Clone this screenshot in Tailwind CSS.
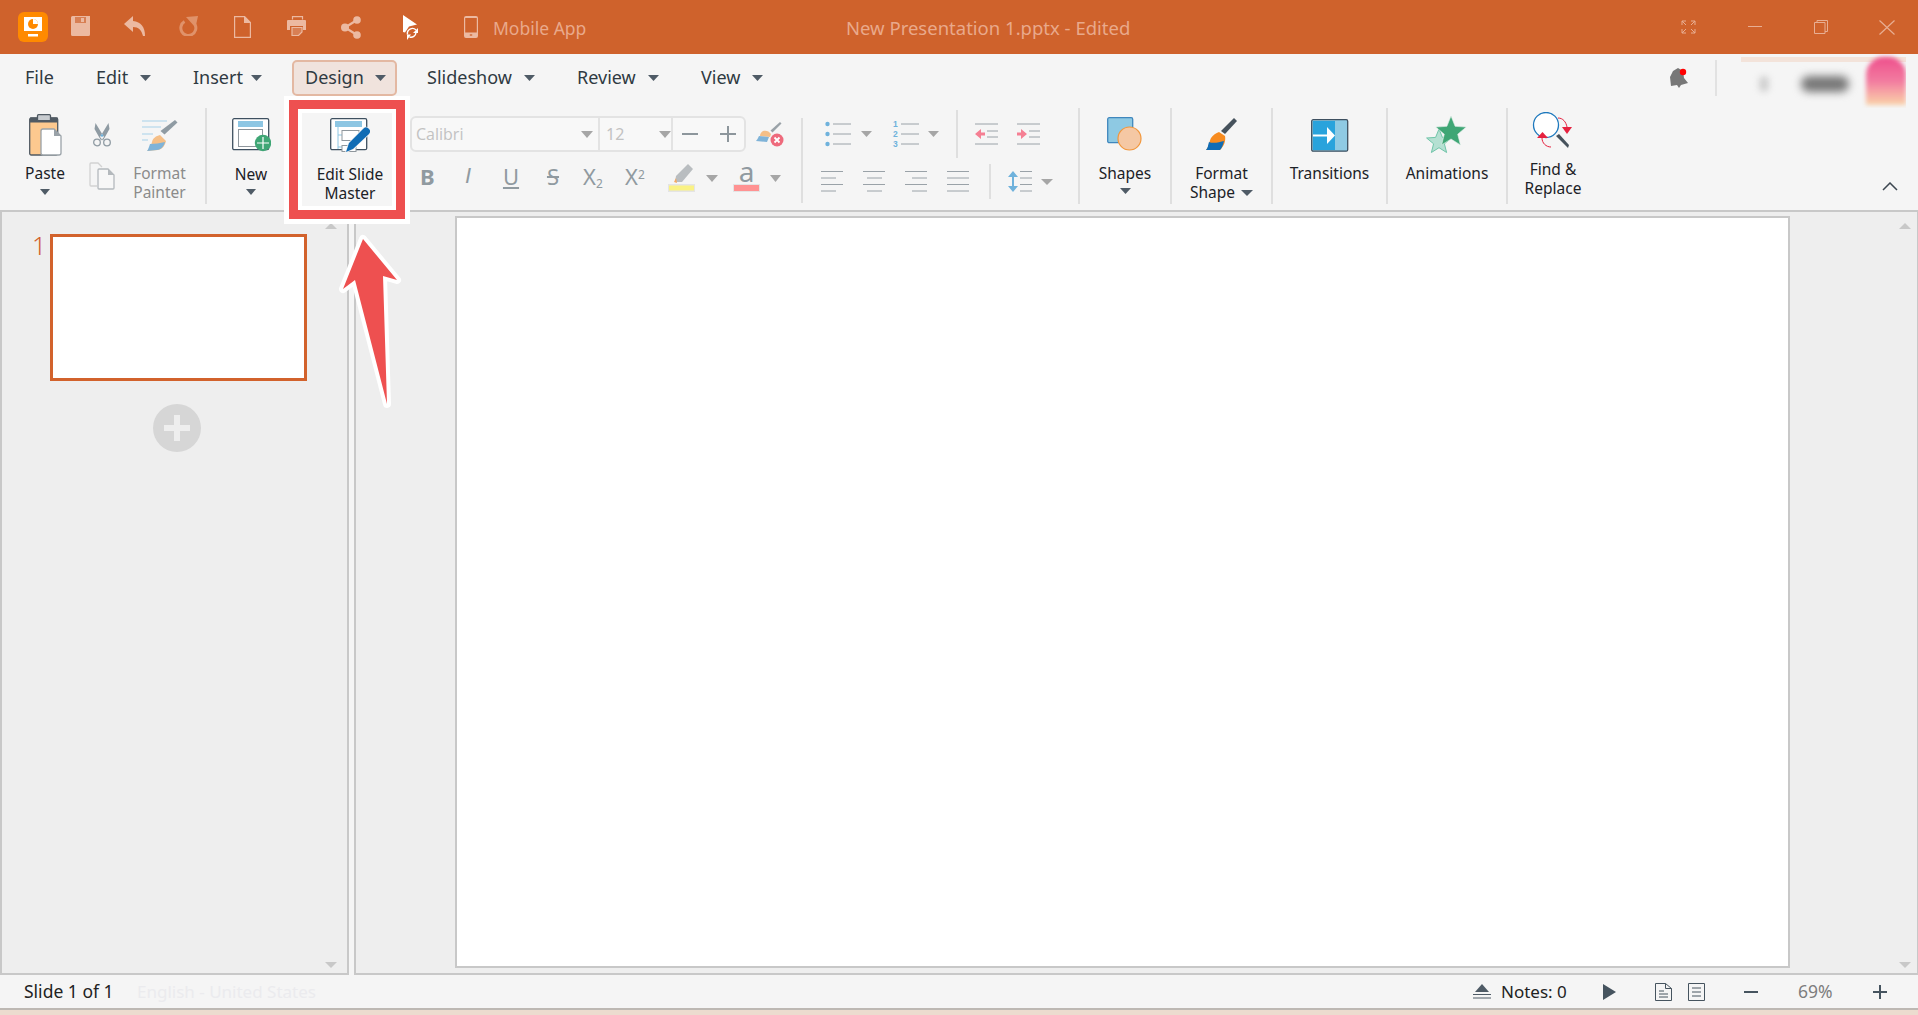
<!DOCTYPE html>
<html lang="en">
<head>
<meta charset="UTF-8">
<title>New Presentation 1.pptx - Edited</title>
<script src="https://cdn.jsdelivr.net/npm/@tailwindcss/browser@4"></script>
</head>
<body class="bg-[#ecdccf]">
<div class="relative w-[1918px] h-[1015px] overflow-hidden font-['Noto_Sans',sans-serif] text-[#222]">

  <!-- title bar -->
  <div class="flex items-center h-[54px] bg-[#cf622c] text-[#e9a98b]">
    <div class="ml-[18px] w-[30px] h-[30px] rounded-[6px] bg-[#ff8a00]">
      <svg width="30" height="30" viewBox="0 0 30 30"><rect x="6" y="5" width="18" height="14" fill="#fff"/><circle cx="15" cy="12" r="5" fill="#ff8a00"/><path d="M15 12V7a5 5 0 0 1 5 5z" fill="#fff"/><rect x="10" y="22" width="10" height="2.5" fill="#fff"/></svg>
    </div>
    <svg class="ml-[23px] -mt-[2px]" width="19" height="20" viewBox="0 0 19 20"><path d="M1.500 0H19v18.500a1.500 1.500 0 0 1-1.500 1.500h-16A1.500 1.500 0 0 1 0 18.500v-17A1.500 1.500 0 0 1 1.500 0z" fill="#ecb9a1"/><rect x="4" y="1" width="11" height="6" fill="#d87f54"/><rect x="10" y="2" width="3" height="4" fill="#ecb9a1"/></svg>
    <svg class="ml-[34px] -mt-[2px]" width="21" height="20" viewBox="0 0 21 20"><path d="M9 0 0 8l9 8v-5c5.500 0 8.500 3 10 9h2c0-9-4-14-12-15z" fill="#ecb9a1"/></svg>
    <svg class="ml-[34px] -mt-[2px]" width="19" height="20" viewBox="0 0 19 20"><path d="M5.500 5.500a7.500 7.500 0 1 0 10.500 3" fill="none" stroke="#e0926a" stroke-width="3"/><path d="M7 1 19 0l-2.500 11.500z" fill="#e0926a"/></svg>
    <svg class="ml-[36px]" width="17" height="22" viewBox="0 0 17 22"><path d="M.6.6h10l5.800 5.800v15H.6z" fill="none" stroke="#ecb9a1" stroke-width="1.200"/><path d="M10 0l7 7h-7z" fill="#ecb9a1"/></svg>
    <svg class="ml-[36px] -mt-[2px]" width="19" height="20" viewBox="0 0 19 20"><path d="M5.500 3.500V.6h10v2.900" fill="none" stroke="#ecb9a1" stroke-width="1.200"/><path d="M1 4h17a1 1 0 0 1 1 1v9h-3v-4H3v4H0V5a1 1 0 0 1 1-1z" fill="#ecb9a1"/><path d="M5 11.500h10V16l-3.500 3.500H5z" fill="#d87f54" stroke="#ecb9a1" stroke-width="1.200"/></svg>
    <svg class="ml-[35px]" width="20" height="23" viewBox="0 0 20 23"><path d="M16 4 4 11.500 16 19" fill="none" stroke="#ecb9a1" stroke-width="2.200"/><circle cx="16" cy="4" r="3.800" fill="#ecb9a1"/><circle cx="4" cy="11.500" r="4" fill="#ecb9a1"/><circle cx="16" cy="19" r="3.800" fill="#ecb9a1"/></svg>
    <svg class="ml-[42px]" width="17" height="25" viewBox="0 0 17 25"><path d="M0 0l14 9.500-8 2-4 6-2-.5z" fill="#fff"/><path d="M4.500 19.500A5 5 0 0 1 13 15M13 17.500a5 5 0 0 1-6.500 4.500" fill="none" stroke="#fff" stroke-width="1.400"/><path d="M15 13v5h-5z" fill="#fff"/><path d="M4 25v-5.500h4z" fill="#fff"/></svg>
    <svg class="ml-[44px]" width="14" height="22" viewBox="0 0 14 22"><path d="M2 0h10a2 2 0 0 1 2 2v18a2 2 0 0 1-2 2H2a2 2 0 0 1-2-2V2a2 2 0 0 1 2-2zM1.200 2v14.500h11.600V2z" fill="#ecb9a1" fill-rule="evenodd"/><rect x="5.800" y="18" width="2.400" height="2" fill="#d87f54"/></svg>
    <span class="ml-[15px] w-[353px] pt-[2px] text-[17.500px]">Mobile App</span>
    <span class="w-[283px] pt-[2px] whitespace-nowrap text-[18.500px]">New Presentation 1.pptx - Edited</span>
    <svg class="ml-[552px]" width="15" height="14" viewBox="0 0 15 14"><path d="M1 5V1h4M10 1h4v4M14 9v4h-4M5 13H1V9M1 1l4 4M14 1l-4 4M14 13l-4-4M1 13l4-4" fill="none" stroke="#e8ae93"/></svg>
    <svg class="ml-[52px]" width="14" height="2" viewBox="0 0 14 2"><rect width="14" height="1" fill="#e8ae93"/></svg>
    <svg class="ml-[52px]" width="14" height="14" viewBox="0 0 14 14"><path d="M.5 2.500h10.500v11H.5zM3 2.500V.5h10.500v11H11" fill="none" stroke="#e8ae93"/></svg>
    <svg class="ml-[51px]" width="16" height="15" viewBox="0 0 16 15"><path d="M.5.5l15 14M15.500.5l-15 14" fill="none" stroke="#e8ae93" stroke-width="1.200"/></svg>
  </div>

  <!-- menu row -->
  <div class="flex items-center h-[54px] pb-[6px] bg-[#f5f5f5] text-[18px] text-[#2f3a42] whitespace-nowrap">
    <span class="ml-[25px] w-[28px] mb-[2px]">File</span>
    <span class="ml-[43px] w-[32px] mb-[2px]">Edit</span>
    <svg class="ml-[12px]" width="11" height="6" viewBox="0 0 11 6"><path d="M0 0h11L5.500 6z" fill="#4f5b66"/></svg>
    <span class="ml-[42px] w-[47px] mb-[2px]">Insert</span>
    <svg class="ml-[11px]" width="11" height="6" viewBox="0 0 11 6"><path d="M0 0h11L5.500 6z" fill="#4f5b66"/></svg>
    <div class="flex items-center ml-[30px] w-[105px] h-[36px] pl-[11px] rounded-[5px] border-2 border-[#e3b8a2] bg-[#f0e3dd]">
      <span class="w-[58px] mb-[2px]">Design</span>
      <svg class="ml-[12px]" width="11" height="6" viewBox="0 0 11 6"><path d="M0 0h11L5.500 6z" fill="#4f5b66"/></svg>
    </div>
    <span class="ml-[30px] w-[86px] mb-[2px]">Slideshow</span>
    <svg class="ml-[11px]" width="11" height="6" viewBox="0 0 11 6"><path d="M0 0h11L5.500 6z" fill="#4f5b66"/></svg>
    <span class="ml-[42px] w-[60px] mb-[2px]">Review</span>
    <svg class="ml-[11px]" width="11" height="6" viewBox="0 0 11 6"><path d="M0 0h11L5.500 6z" fill="#4f5b66"/></svg>
    <span class="ml-[42px] w-[41px] mb-[2px]">View</span>
    <svg class="ml-[10px]" width="11" height="6" viewBox="0 0 11 6"><path d="M0 0h11L5.500 6z" fill="#4f5b66"/></svg>

    <svg class="ml-auto" width="20" height="20" viewBox="0 0 20 20"><path d="M4 3l5-3 5 3 1 7 4 5-7 2-2 3-2-3-6 1-1-9z" fill="#777"/><circle cx="14" cy="4" r="3.200" fill="#f00"/></svg>
    <div class="ml-[26px] w-[2px] h-[36px] bg-[#e2e2e2]"></div>
    <div class="relative self-start ml-[24px] mr-[12px] w-[165px] h-[54px] overflow-hidden">
      <div class="absolute left-0 right-0 top-[3px] h-[5px] bg-[#f3e3da]"></div>
      <div class="absolute left-[18px] top-[22px] w-[10px] h-[16px] rounded-full bg-[#d0d0d0] blur-[3px]"></div>
      <div class="absolute left-[60px] top-[22px] w-[48px] h-[16px] rounded-full bg-[#777] blur-[4px]"></div>
      <div class="absolute left-[125px] top-[3px] w-[40px] h-[48px] rounded-t-[18px] bg-gradient-to-b from-[#ee4e8c] via-[#f27ba0] to-[#f8d2a8] blur-[2px]"></div>
    </div>
  </div>

  <!-- ribbon -->
  <div class="flex h-[102px] bg-[#f5f5f5] text-[15.500px] leading-[19px] text-[#1c2227]">
    <!-- paste -->
    <div class="flex flex-col items-center w-[90px] pt-[6px]">
      <svg width="33" height="42" viewBox="0 0 33 42"><rect x=".7" y="4" width="28" height="37" rx="1.500" fill="#fdc98f" stroke="#505a63" stroke-width="1.300"/><rect x="1" y="3.500" width="27.500" height="5" fill="#505a63"/><rect x="8.500" y=".7" width="13" height="6" rx="1" fill="#c8ccd0" stroke="#505a63" stroke-width="1.300"/><path d="M14 15h11l7 7v17a2 2 0 0 1-2 2H14a2 2 0 0 1-2-2V17a2 2 0 0 1 2-2z" fill="#fff" stroke="#9aa2a8" stroke-width="1.300"/><path d="M25 15v7h7z" fill="#9aa2a8"/></svg>
      <span class="mt-[8px]">Paste</span>
      <svg class="mt-[6px]" width="10" height="6" viewBox="0 0 10 6"><path d="M0 0h10L5 6z" fill="#4f5b66"/></svg>
    </div>
    <div class="flex flex-col items-center w-[24px] pt-[15px]">
      <svg width="18" height="24" viewBox="0 0 18 24"><path d="M2.500 0l8.500 14-3 3.500L1.500 6zM15.500 0 7 14l3 3.500 6.500-11.500z" fill="#8f9ba3"/><circle cx="9" cy="12.500" r="1.300" fill="#6fb2dc"/><circle cx="4" cy="19.500" r="3.300" fill="#f5f5f5" stroke="#8f9ba3" stroke-width="1.300"/><circle cx="14" cy="19.500" r="3.300" fill="#f5f5f5" stroke="#8f9ba3" stroke-width="1.300"/></svg>
      <svg class="mt-[15px]" width="26" height="28" viewBox="0 0 26 28"><path d="M8 24H2a1 1 0 0 1-1-1V2a1 1 0 0 1 1-1h7l4 4" fill="none" stroke="#d2d2d2" stroke-width="1.300"/><path d="M10 7h9l6 6v13a1 1 0 0 1-1 1H10a1 1 0 0 1-1-1V8a1 1 0 0 1 1-1z" fill="#f7f7f7" stroke="#b4b9bd" stroke-width="1.300"/><path d="M19 7v6h6z" fill="#b4b9bd"/></svg>
    </div>
    <div class="flex flex-col items-center w-[91px] pt-[11px] text-[#8b8b8b]">
      <svg width="36" height="32" viewBox="0 0 36 32"><path d="M0 2h25M0 8h19M0 15h11M0 21h6" stroke="#a8d2ea" stroke-width="1.200"/><path d="M33 1l2.500 2.500-13 12-4-3.500z" fill="#8f9ba3"/><path d="M18 16l6 6c-1 4-3 8-8 9l-11 1c3-2 4-6 5-9 1-4 4-6 8-7z" fill="#f5bf87"/><path d="M8 25c5 0 10-1 15-2-1 4-4 8-8 8l-10 1c1-1 2-4 3-7z" fill="#7fb3d8"/></svg>
      <span class="mt-[13px] text-center">Format Painter</span>
    </div>
    <div class="w-[2px] h-[96px] bg-[#dfdfdf]"></div>
    <!-- new -->
    <div class="flex flex-col items-center w-[88px] pt-[10px]">
      <svg width="39" height="34" viewBox="0 0 39 34"><rect x=".7" y=".7" width="36" height="31" rx="1.500" fill="#fff" stroke="#3e5060" stroke-width="1.300"/><rect x="6" y="3" width="25" height="6" fill="#8dc6e3"/><rect x="6.500" y="11.500" width="24" height="17" fill="#fff" stroke="#8f979d"/><circle cx="31" cy="25" r="8.200" fill="#3fa675"/><path d="M31 19v12M25 25h12" stroke="#fff" stroke-width="1.200"/></svg>
      <span class="mt-[13px]">New</span>
      <svg class="mt-[5px]" width="10" height="6" viewBox="0 0 10 6"><path d="M0 0h10L5 6z" fill="#4f5b66"/></svg>
    </div>
    <!-- edit slide master -->
    <div class="flex flex-col items-center w-[110px] pt-[10px]">
      <svg width="40" height="34" viewBox="0 0 40 34"><rect x=".7" y=".7" width="36" height="31" rx="1.500" fill="#fff" stroke="#3e5060" stroke-width="1.300"/><rect x="5" y="3" width="27" height="6" fill="#8dc6e3"/><path d="M8 9v22M8 17h4M8 29h4" stroke="#8dc6e3"/><rect x="12" y="12.500" width="17" height="10" fill="#fff" stroke="#8f979d"/><rect x="12" y="27.500" width="14" height="6" fill="#fff" stroke="#8f979d"/><path d="M16 34l3-9 14-14a3 3 0 0 1 6 5L23 31z" fill="#f5f5f5" stroke="#f5f5f5" stroke-width="1.500"/><path d="M16 34l3-9 14-14a3 3 0 0 1 6 5L23 31z" fill="#0f6cb5"/></svg>
      <span class="mt-[13px] text-center w-[90px]">Edit Slide Master</span>
    </div>
    <div class="w-[5px]"></div>

    <!-- font -->
    <div class="w-[391px] pt-[8px]">
      <div class="flex items-center">
        <div class="flex items-stretch w-[336px] h-[36px] rounded-[6px] border-2 border-[#e3e3e3] bg-[#f8f8f8] text-[#c2c2c2] text-[16px]">
          <div class="flex items-center w-[186px] pl-[4px]">
            <span class="w-[165px] font-['Open_Sans',sans-serif]">Calibri</span>
            <svg width="12" height="7" viewBox="0 0 12 7"><path d="M0 0h12L6 7z" fill="#a6a6a6"/></svg>
          </div>
          <div class="flex items-center w-[73px] pl-[6px] border-l-2 border-[#e3e3e3]">
            <span class="w-[53px]">12</span>
            <svg width="12" height="7" viewBox="0 0 12 7"><path d="M0 0h12L6 7z" fill="#a6a6a6"/></svg>
          </div>
          <div class="flex items-center pl-[9px] border-l-2 border-[#e3e3e3]">
            <svg width="16" height="2" viewBox="0 0 16 2"><rect width="16" height="2" fill="#8d969c"/></svg>
            <svg class="ml-[22px]" width="16" height="16" viewBox="0 0 16 16"><path d="M0 7h16v2H0zM7 0h2v16H7z" fill="#8d969c"/></svg>
          </div>
        </div>
        <svg class="ml-[10px]" width="28" height="25" viewBox="0 0 28 25"><path d="M24 0l1.500 1.500-9 9-2-2z" fill="#9aa2a8"/><path d="M7 9c3-1 6 0 8 3l-1 3-10-1c0-2 1-4 3-5z" fill="#f5bf87"/><path d="M3 14l10 1-2 5-11-1c1-1 2-3 3-5z" fill="#7fb3d8"/><circle cx="21" cy="18" r="6.500" fill="#ee6a7c"/><path d="M18.500 15.500l5 5M23.500 15.500l-5 5" stroke="#fff" stroke-width="1.800"/></svg>
      </div>
      <div class="flex items-center h-[28px] mt-[12px] text-[#909aa0] text-[22px] leading-none">
        <span class="ml-[10px] w-[13px] mb-[4px] text-center font-bold">B</span>
        <span class="ml-[29px] w-[12px] mb-[4px] text-center italic font-['Liberation_Sans',sans-serif]">I</span>
        <span class="ml-[28px] w-[18px] mb-[4px] text-center underline">U</span>
        <span class="ml-[24px] w-[18px] mb-[4px] text-center line-through">S</span>
        <span class="ml-[21px] w-[23px] mb-[4px] whitespace-nowrap">X<sub class="text-[12px]">2</sub></span>
        <span class="ml-[19px] w-[23px] mb-[4px] whitespace-nowrap">X<sup class="text-[12px]">2</sup></span>
        <svg class="ml-[20px]" width="27" height="28" viewBox="0 0 27 28"><path d="M20 0l5 5-11 13H7l1-6z" fill="#b9bdc0"/><path d="M8 14l-2 4 3 1z" fill="#f5a860"/><rect y="20" width="27" height="8" fill="#e4e4e4"/><rect x="1" y="21.500" width="25" height="5" fill="#faf284"/></svg>
        <svg class="ml-[11px]" width="12" height="7" viewBox="0 0 12 7"><path d="M0 0h12L6 7z" fill="#a6a6a6"/></svg>
        <div class="flex flex-col items-center ml-[15px] w-[27px] h-[28px]">
          <span class="text-[#909aa0] text-[28px] leading-[14px] h-[20px]">a</span>
          <div class="w-[27px] h-[8px] bg-[#ff9292] border border-[#e4e4e4]"></div>
        </div>
        <svg class="ml-[10px]" width="11" height="7" viewBox="0 0 11 7"><path d="M0 0h11L5.500 7z" fill="#a6a6a6"/></svg>
      </div>
    </div>
    <div class="w-[2px] h-[85px] mt-[10px] bg-[#dfdfdf]"></div>

    <!-- paragraph -->
    <div class="w-[275px] pt-[2px]">
      <div class="flex items-center h-[48px]">
        <svg class="ml-[22px]" width="26" height="26" viewBox="0 0 26 26"><circle cx="2.500" cy="3" r="2.200" fill="#6fb2dc"/><circle cx="2.500" cy="13" r="2.200" fill="#6fb2dc"/><circle cx="2.500" cy="23" r="2.200" fill="#6fb2dc"/><path d="M8 3h18M8 13h18M8 23h18" stroke="#9aa2a8"/></svg>
        <svg class="ml-[10px]" width="11" height="6" viewBox="0 0 11 6"><path d="M0 0h11L5.500 6z" fill="#a6a6a6"/></svg>
        <div class="flex flex-col ml-[21px] w-[8px] text-[#6fb2dc] text-[8.500px] leading-[10px] font-bold font-['Liberation_Sans',sans-serif]"><span>1</span><span>2</span><span>3</span></div>
        <svg width="18" height="26" viewBox="0 0 18 26"><path d="M0 3h18M0 13h18M0 23h18" stroke="#9aa2a8"/></svg>
        <svg class="ml-[9px]" width="11" height="6" viewBox="0 0 11 6"><path d="M0 0h11L5.500 6z" fill="#a6a6a6"/></svg>
        <div class="ml-[17px] w-[2px] h-[48px] bg-[#dfdfdf]"></div>
        <svg class="ml-[17px]" width="23" height="22" viewBox="0 0 23 22"><path d="M0 1h23M12 8h11M12 14h11M0 21h23" stroke="#9aa2a8"/><path d="M0 11l6-5v3.500h4v3H6V16z" fill="#f57f93"/></svg>
        <svg class="ml-[19px]" width="23" height="22" viewBox="0 0 23 22"><path d="M0 1h23M12 8h11M12 14h11M0 21h23" stroke="#9aa2a8"/><path d="M10 11 4 6v3.500H0v3h4V16z" fill="#f57f93"/></svg>
      </div>
      <div class="flex items-start h-[35px] mt-[6px]">
        <svg class="ml-[18px] mt-[7px]" width="22" height="21" viewBox="0 0 22 21"><path d="M0 .5h22M0 7h15M0 13.500h22M0 20h15" stroke="#9aa2a8"/></svg>
        <svg class="ml-[20px] mt-[7px]" width="22" height="21" viewBox="0 0 22 21"><path d="M0 .5h22M4 7h15M0 13.500h22M4 20h15" stroke="#9aa2a8"/></svg>
        <svg class="ml-[20px] mt-[7px]" width="22" height="21" viewBox="0 0 22 21"><path d="M0 .5h22M7 7h15M0 13.500h22M7 20h15" stroke="#9aa2a8"/></svg>
        <svg class="ml-[20px] mt-[7px]" width="22" height="21" viewBox="0 0 22 21"><path d="M0 .5h22M0 7h22M0 13.500h22M0 20h22" stroke="#9aa2a8"/></svg>
        <div class="ml-[20px] w-[2px] h-[35px] bg-[#dfdfdf]"></div>
        <svg class="ml-[17px] mt-[7px]" width="24" height="21" viewBox="0 0 24 21"><path d="M12 .5h12M12 7h12M12 13.500h12M12 20h12" stroke="#9aa2a8"/><path d="M5 0l5 6H6v9h4l-5 6-5-6h4V6H0z" fill="#6fb2dc"/></svg>
        <svg class="ml-[9px] mt-[15px]" width="12" height="6" viewBox="0 0 12 6"><path d="M0 0h12L6 6z" fill="#a6a6a6"/></svg>
      </div>
    </div>
    <div class="w-[2px] h-[96px] bg-[#dfdfdf]"></div>

    <!-- shapes -->
    <div class="flex flex-col items-center w-[90px] pt-[9px]">
      <svg width="36" height="34" viewBox="0 0 36 34"><rect x=".7" y=".7" width="25" height="25" rx="1.500" fill="#8ec9e3" stroke="#3f87bd" stroke-width="1.300"/><circle cx="22.500" cy="21.500" r="11.500" fill="#f5c8a4" stroke="#f2973c" stroke-width="1.200"/></svg>
      <span class="mt-[13px]">Shapes</span>
      <svg class="mt-[5px]" width="11" height="6" viewBox="0 0 11 6"><path d="M0 0h11L5.500 6z" fill="#4f5b66"/></svg>
    </div>
    <div class="w-[2px] h-[96px] bg-[#dfdfdf]"></div>
    <!-- format shape -->
    <div class="flex flex-col items-center w-[99px] pt-[10px]">
      <svg width="31" height="33" viewBox="0 0 31 33"><path d="M28 0l3 3-12 13-4-3z" fill="#46525c"/><path d="M13 14l6 4c1 5-1 10-5 14H0c3-3 3-8 5-12 2-3 5-5 8-6z" fill="#f78b1f"/><path d="M3 24c4 2 11 0 15-1-1 4-2 7-4 9H0c2-2 2-5 3-8z" fill="#0f6cb5"/></svg>
      <span class="mt-[13px]">Format</span>
      <div class="flex items-center"><span>Shape</span><svg class="ml-[6px]" width="12" height="6" viewBox="0 0 12 6"><path d="M0 0h12L6 6z" fill="#4f5b66"/></svg></div>
    </div>
    <div class="w-[2px] h-[96px] bg-[#dfdfdf]"></div>
    <!-- transitions -->
    <div class="flex flex-col items-center w-[113px] pt-[11px]">
      <svg width="38" height="33" viewBox="0 0 38 33"><rect x=".7" y=".7" width="36" height="31.500" rx="1.500" fill="#8fcae3" stroke="#3e5060" stroke-width="1.300"/><rect x="2" y="2" width="22" height="29" fill="#29a3dc"/><path d="M2 15.500h14v2H2z" fill="#fff"/><path d="M16 8l8 8.500-8 8.500z" fill="#fff"/></svg>
      <span class="mt-[12px]">Transitions</span>
    </div>
    <div class="w-[2px] h-[96px] bg-[#dfdfdf]"></div>
    <!-- animations -->
    <div class="flex flex-col items-center w-[118px] pt-[8px]">
      <svg width="42" height="38" viewBox="0 0 42 38"><path d="M13 13l3.400 8.400 9 .6-7 5.800 2.200 8.700-7.600-4.800-7.600 4.800 2.200-8.700-7-5.800 9-.6z" fill="#b5e0d2" stroke="#6fc4a8"/><path d="M25 0l4.100 10.300 11.100.8-8.500 7.100 2.700 10.700-9.400-5.900-9.400 5.900 2.700-10.700-8.500-7.100 11.100-.8z" fill="#3fa675" stroke="#e2eee9" stroke-width=".6"/></svg>
      <span class="mt-[10px]">Animations</span>
    </div>
    <div class="w-[2px] h-[96px] bg-[#dfdfdf]"></div>
    <!-- find & replace -->
    <div class="flex flex-col items-center w-[90px] pt-[4px]">
      <svg width="42" height="37" viewBox="0 0 42 37"><circle cx="14" cy="13" r="12.500" fill="#fff" stroke="#1d78bd" stroke-width="1.300"/><path d="M24 24l3-2 10 11-1 3z" fill="#46525c"/><path d="M26 6c5 0 8 4 9 9M10 26c0 5 4 9 9 9" fill="none" stroke="#e6213f"/><path d="M30 15h10l-5 7z" fill="#e6213f"/><path d="M5 26h11l-5.500-6z" fill="#e6213f"/></svg>
      <span class="mt-[11px] text-center">Find &amp;<br>Replace</span>
    </div>
    <svg class="ml-auto mr-[20px] mt-[74px]" width="16" height="9" viewBox="0 0 16 9"><path d="M1 8l7-7 7 7" fill="none" stroke="#3c4650" stroke-width="1.500"/></svg>
  </div>

  <!-- panes -->
  <div class="flex h-[765px] bg-[#f5f5f5]">
    <div class="relative w-[349px] border-2 border-[#c8c8c8] bg-[#eeeeee]">
      <div class="flex pt-[22px] pl-[30px]">
        <span class="w-[18px] text-[#d2622c] text-[25px] leading-[22px] font-light">1</span>
        <div class="w-[257px] h-[147px] bg-white border-[3px] border-[#d2622c]"></div>
      </div>
      <div class="relative ml-[151px] mt-[23px] w-[48px] h-[48px] rounded-full bg-[#d6d6d6]">
        <div class="absolute left-[11px] top-[21px] w-[26px] h-[6px] bg-[#eeeeee]"></div>
        <div class="absolute left-[21px] top-[11px] w-[6px] h-[26px] bg-[#eeeeee]"></div>
      </div>
      <svg class="absolute left-[323px] top-[11px]" width="12" height="6" viewBox="0 0 12 6"><path d="M6 0l6 6H0z" fill="#c8c8c8"/></svg>
      <svg class="absolute left-[323px] top-[750px]" width="12" height="6" viewBox="0 0 12 6"><path d="M0 0h12L6 6z" fill="#c8c8c8"/></svg>
    </div>
    <div class="relative ml-[5px] flex-1 pl-[99px] pt-[4px] border-2 border-r border-[#c8c8c8] bg-[#eeeeee]">
      <div class="w-[1335px] h-[752px] bg-white border-2 border-[#c8c8c8]"></div>
      <svg class="absolute left-[1543px] top-[11px]" width="12" height="6" viewBox="0 0 12 6"><path d="M6 0l6 6H0z" fill="#c8c8c8"/></svg>
      <svg class="absolute left-[1543px] top-[750px]" width="12" height="6" viewBox="0 0 12 6"><path d="M0 0h12L6 6z" fill="#c8c8c8"/></svg>
    </div>
  </div>

  <!-- status bar -->
  <div class="flex items-center h-[33px] bg-[#f5f5f5] text-[17px]">
    <span class="ml-[24px] w-[87px] whitespace-nowrap text-[17.500px]">Slide 1 of 1</span>
    <span class="ml-[26px] text-[#ebebee]">English - United States</span>
    <svg class="ml-auto" width="18" height="15" viewBox="0 0 18 15"><path d="M9 0l7 8H2z" fill="#4f5b66"/><path d="M0 10.500h18M0 14h18" stroke="#4f5b66"/></svg>
    <span class="ml-[10px] w-[65px] whitespace-nowrap">Notes: 0</span>
    <svg class="ml-[37px]" width="13" height="16" viewBox="0 0 13 16"><path d="M0 0l13 8-13 8z" fill="#46545f"/></svg>
    <svg class="ml-[39px]" width="17" height="18" viewBox="0 0 17 18"><path d="M.5.5h10l6 5v12H.5zM10.500.5v5h6M4 8h5M4 11h9M4 14h9" fill="none" stroke="#46545f"/></svg>
    <svg class="ml-[16px]" width="17" height="18" viewBox="0 0 17 18"><path d="M.5.5h16v17H.5zM4 5h9M4 9h9M4 13h9" fill="none" stroke="#46545f"/></svg>
    <svg class="ml-[39px]" width="14" height="2" viewBox="0 0 14 2"><rect width="14" height="2" fill="#46545f"/></svg>
    <span class="ml-[40px] w-[34px] text-[#7d7d7d] text-[17.500px]">69%</span>
    <svg class="ml-[41px] mr-[31px]" width="14" height="14" viewBox="0 0 14 14"><path d="M0 6h14v2H0zM6 0h2v14H6z" fill="#46545f"/></svg>
  </div>
  <div class="h-[2px] bg-[#bdb8b3]"></div>

  <!-- annotation: red box over Edit Slide Master -->
  <div class="absolute left-[284px] top-[96px] w-[126px] h-[128px] border-[5px] border-t-4 border-white pointer-events-none">
    <div class="w-full h-full border-[9px] border-[#ee5050]">
      <div class="w-full h-full border-[4px] border-white"></div>
    </div>
  </div>
  <svg class="absolute left-[330px] top-[226px]" width="78" height="190" viewBox="330 226 78 190"><path d="M363 239l34 41-14-4 4 128-32-124-12 9z" fill="#ee5050" stroke="#fff" stroke-width="8" stroke-linejoin="round" paint-order="stroke"/></svg>
</div>
</body>
</html>
